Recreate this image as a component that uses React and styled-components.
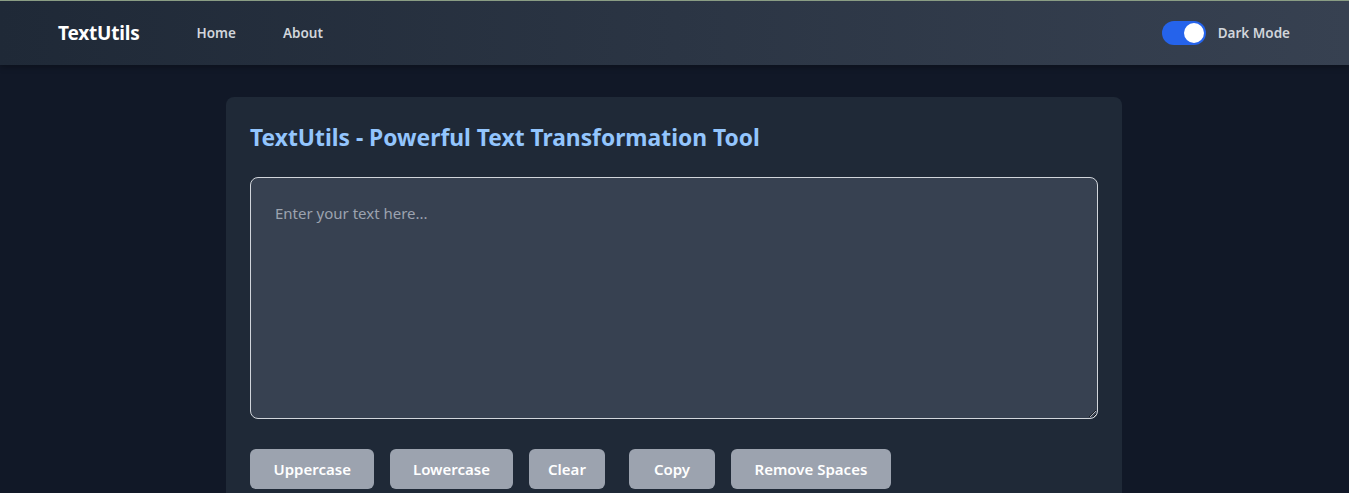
import React, { useState } from "react";
import styled, { createGlobalStyle } from "styled-components";

const GlobalStyle = createGlobalStyle`
  * { box-sizing: border-box; }
  body {
    margin: 0;
    background-color: #111827;
    font-family: "Noto Sans", "Open Sans", sans-serif;
    color: #f3f4f6;
  }
`;

const Navbar = styled.nav`
  height: 65px;
  display: flex;
  align-items: center;
  justify-content: space-between;
  padding: 0 59px 0 58px;
  background: linear-gradient(to right, #1f2937, #374151);
  border-top: 1px solid #8a9d84;
  box-shadow: 0 2px 6px rgba(0, 0, 0, 0.3);
`;

const NavLeft = styled.div`
  display: flex;
  align-items: center;
`;

const Brand = styled.a`
  font-size: 19px;
  font-weight: 700;
  color: #ffffff;
  letter-spacing: -0.2px;
  margin-right: 57px;
  margin-top: -1px;
`;

const NavLink = styled.a`
  font-size: 13.5px;
  font-weight: 600;
  color: #d1d5db;
  margin-right: 47px;
`;

const ToggleWrap = styled.label`
  display: flex;
  align-items: center;
  gap: 12px;
  font-size: 13.5px;
  font-weight: 600;
  color: #d1d5db;
`;

const Track = styled.span`
  width: 44px;
  height: 24px;
  border-radius: 12px;
  background: ${(p) => (p.$on ? "#2563eb" : "#6b7280")};
  display: flex;
  align-items: center;
  justify-content: ${(p) => (p.$on ? "flex-end" : "flex-start")};
  padding: 2px;
`;

const Knob = styled.span`
  width: 20px;
  height: 20px;
  border-radius: 50%;
  background: #ffffff;
`;

const Main = styled.main`
  display: flex;
  justify-content: center;
  padding: 32px 1px 0 0;
`;

const Card = styled.section`
  width: 896px;
  background: #1f2937;
  border-radius: 8px;
  padding: 24px 24px 32px;
`;

const Heading = styled.h1`
  margin: 0 0 23px;
  font-size: 22.8px;
  font-weight: 700;
  color: #93c5fd;
  line-height: 33px;
`;

const TextArea = styled.textarea`
  display: block;
  width: 100%;
  height: 242px;
  background: #374151;
  border: 1px solid #d1d5db;
  border-radius: 8px;
  padding: 25px 24px;
  font-family: inherit;
  font-size: 15px;
  color: #f3f4f6;
  outline: none;
  &::placeholder {
    color: #9ca3af;
  }
`;

const Buttons = styled.div`
  display: flex;
  gap: 16px;
  margin-top: 30px;
`;

const Button = styled.button`
  height: 40px;
  padding: 0 ${(p) => p.$pad || 24}px;
  margin-left: ${(p) => p.$shift || 0}px;
  border: none;
  border-radius: 6px;
  background: #9ca3af;
  color: #ffffff;
  font-family: inherit;
  font-size: 15px;
  font-weight: 600;
  cursor: pointer;
`;

export default function App() {
  const [dark, setDark] = useState(true);
  const [text, setText] = useState("");

  return (
    <>
      <GlobalStyle />
      <Navbar>
        <NavLeft>
          <Brand>TextUtils</Brand>
          <NavLink>Home</NavLink>
          <NavLink>About</NavLink>
        </NavLeft>
        <ToggleWrap onClick={() => setDark(!dark)}>
          <Track $on={dark}>
            <Knob />
          </Track>
          Dark Mode
        </ToggleWrap>
      </Navbar>
      <Main>
        <Card>
          <Heading>TextUtils - Powerful Text Transformation Tool</Heading>
          <TextArea
            placeholder="Enter your text here..."
            value={text}
            onChange={(e) => setText(e.target.value)}
          />
          <Buttons>
            <Button $pad={23.5}>Uppercase</Button>
            <Button $pad={22.5}>Lowercase</Button>
            <Button $pad={19.5}>Clear</Button>
            <Button $pad={24.5} $shift={8}>Copy</Button>
            <Button $pad={24}>Remove Spaces</Button>
          </Buttons>
        </Card>
      </Main>
    </>
  );
}
